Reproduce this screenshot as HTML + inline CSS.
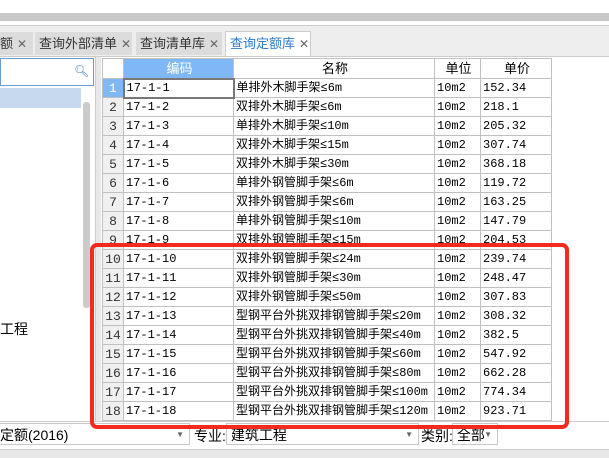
<html><head><style>
body{margin:0;width:609px;height:457px;background:#fff;position:relative;overflow:hidden;font-family:"Liberation Sans","Noto Sans CJK SC",sans-serif;font-size:13px}
.a{position:absolute}
.tab{position:absolute;top:32px;height:23px;background:#dcdcdc;font-size:13px;line-height:23px;color:#333;white-space:nowrap;overflow:hidden;padding-left:4px;box-sizing:border-box}
.tab .x{color:#666;margin-left:4px;font-size:12px}
table{position:absolute;left:102px;top:58px;border-collapse:collapse;font-family:"Liberation Mono","Noto Sans CJK SC",monospace;font-size:12px;table-layout:fixed}
td{border:1px solid #c0c0c0;height:19px;padding:0 0 0 2px;white-space:nowrap;overflow:hidden;line-height:17px}
td.n{background:#f0f0f0;text-align:center;padding:0;color:#333;font-size:13px}
tr.h td{height:20px;text-align:center;font-family:"Liberation Sans","Noto Sans CJK SC",sans-serif;font-size:13px;background:#fff}
.cb{position:absolute;top:423px;height:22px;border:1px solid #c8c8c8;background:#fff;line-height:22px;font-size:14px;box-sizing:border-box}
.ar{position:absolute;right:5px;top:0;font-size:8px;color:#666}
</style></head><body>
<div class="a" style="left:0;top:13px;width:609px;height:8px;background:#c8c8c8"></div>
<div class="a" style="left:0;top:25px;width:609px;height:1px;background:#ccc"></div>
<div class="a" style="left:0;top:26px;width:609px;height:30px;background:#eeeeee"></div>
<div class="tab" style="left:0;width:33px;padding-left:0">额<span class="x">✕</span></div>
<div class="tab" style="left:35px;width:97px">查询外部清单<span class="x">✕</span></div>
<div class="tab" style="left:136px;width:86px">查询清单库<span class="x">✕</span></div>
<div class="tab" style="left:225px;width:86px;background:#fff;border:1px solid #ccc;border-bottom:none;top:31px;height:25px;color:#2a7ad2">查询定额库<span class="x">✕</span></div>
<div class="a" style="left:0;top:56px;width:609px;height:1px;background:#ccc"></div>
<div class="a" style="left:0;top:58px;width:92px;height:26px;border:1px solid #6a9bd8;background:#fff"></div>
<div class="a" style="left:74px;top:64px;color:#3a7fc0;font-size:12px">&#x1F50D;&#xFE0E;</div>
<div class="a" style="left:0;top:88px;width:81px;height:20px;background:#c7d9ef"></div>
<div class="a" style="left:83px;top:102px;width:7px;height:206px;background:#cbcbcb;border-radius:3px"></div>
<div class="a" style="left:95px;top:57px;width:5px;height:365px;background:#e8e8e8;border-left:1px solid #ccc"></div>
<div class="a" style="left:0;top:319px;font-size:14px">工程</div>
<table>
<tr class="h"><td class="n" style="width:20px"></td><td style="width:107px;background:#7fb8f4;color:#fff">编码</td><td style="width:198px">名称</td><td style="width:43px">单位</td><td style="width:68px">单价</td></tr>
<tr><td class="n" style="background:#7fb8f4;color:#fff">1</td><td style="border:2px solid #777">17-1-1</td><td>单排外木脚手架≤6m</td><td>10m2</td><td>152.34</td></tr>
<tr><td class="n">2</td><td>17-1-2</td><td>双排外木脚手架≤6m</td><td>10m2</td><td>218.1</td></tr>
<tr><td class="n">3</td><td>17-1-3</td><td>单排外木脚手架≤10m</td><td>10m2</td><td>205.32</td></tr>
<tr><td class="n">4</td><td>17-1-4</td><td>双排外木脚手架≤15m</td><td>10m2</td><td>307.74</td></tr>
<tr><td class="n">5</td><td>17-1-5</td><td>双排外木脚手架≤30m</td><td>10m2</td><td>368.18</td></tr>
<tr><td class="n">6</td><td>17-1-6</td><td>单排外钢管脚手架≤6m</td><td>10m2</td><td>119.72</td></tr>
<tr><td class="n">7</td><td>17-1-7</td><td>双排外钢管脚手架≤6m</td><td>10m2</td><td>163.25</td></tr>
<tr><td class="n">8</td><td>17-1-8</td><td>单排外钢管脚手架≤10m</td><td>10m2</td><td>147.79</td></tr>
<tr><td class="n">9</td><td>17-1-9</td><td>双排外钢管脚手架≤15m</td><td>10m2</td><td>204.53</td></tr>
<tr><td class="n">10</td><td>17-1-10</td><td>双排外钢管脚手架≤24m</td><td>10m2</td><td>239.74</td></tr>
<tr><td class="n">11</td><td>17-1-11</td><td>双排外钢管脚手架≤30m</td><td>10m2</td><td>248.47</td></tr>
<tr><td class="n">12</td><td>17-1-12</td><td>双排外钢管脚手架≤50m</td><td>10m2</td><td>307.83</td></tr>
<tr><td class="n">13</td><td>17-1-13</td><td>型钢平台外挑双排钢管脚手架≤20m</td><td>10m2</td><td>308.32</td></tr>
<tr><td class="n">14</td><td>17-1-14</td><td>型钢平台外挑双排钢管脚手架≤40m</td><td>10m2</td><td>382.5</td></tr>
<tr><td class="n">15</td><td>17-1-15</td><td>型钢平台外挑双排钢管脚手架≤60m</td><td>10m2</td><td>547.92</td></tr>
<tr><td class="n">16</td><td>17-1-16</td><td>型钢平台外挑双排钢管脚手架≤80m</td><td>10m2</td><td>662.28</td></tr>
<tr><td class="n">17</td><td>17-1-17</td><td>型钢平台外挑双排钢管脚手架≤100m</td><td>10m2</td><td>774.34</td></tr>
<tr><td class="n">18</td><td>17-1-18</td><td>型钢平台外挑双排钢管脚手架≤120m</td><td>10m2</td><td>923.71</td></tr>
</table>
<div class="a" style="left:0;top:421px;width:609px;height:1px;background:#ccc"></div>
<div class="cb" style="left:-1px;width:191px">定额(2016)<span class="ar">▼</span></div>
<div class="a" style="left:194px;top:426px;font-size:14px">专业:</div>
<div class="cb" style="left:226px;width:193px">&nbsp;建筑工程<span class="ar">▼</span></div>
<div class="a" style="left:421px;top:426px;font-size:14px">类别:</div>
<div class="cb" style="left:452px;width:46px">&nbsp;全部<span class="ar">▼</span></div>
<div class="a" style="left:90px;top:243px;width:471px;height:178px;border:4px solid #f42a1f;border-radius:7px"></div>
<div class="a" style="left:0;top:449px;width:609px;height:8px;background:#e8e8e8;border-top:1px solid #ccc"></div>
</body></html>
